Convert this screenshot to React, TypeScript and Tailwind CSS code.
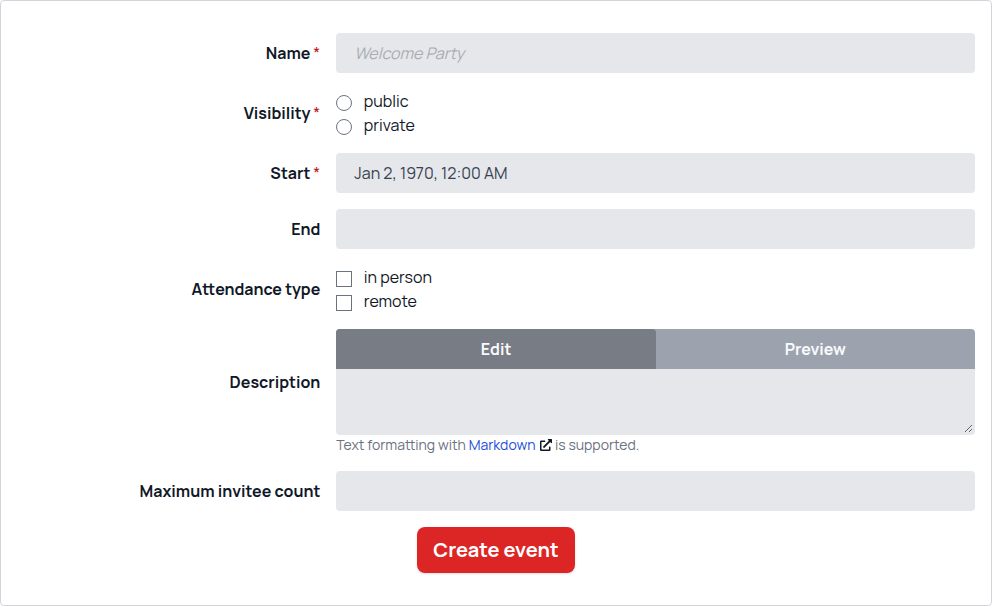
import type { ReactNode } from 'react';
import { FaExternalLinkAlt } from 'react-icons/fa';

function Row({ label, required, children }: { label: string; required?: boolean; children: ReactNode }) {
  return (
    <div className="flex items-center">
      <div className="w-1/3 pr-4 text-right font-bold text-[#111827]">
        {label}
        {required && <span className="ml-[3px] font-normal text-[#b91c1c]">*</span>}
      </div>
      <div className="w-2/3">{children}</div>
    </div>
  );
}

const field =
  'block h-10 w-full rounded bg-[#e5e7eb] px-[18px] text-base text-[#374151] outline-none placeholder:italic placeholder:text-[#a9adb6]';

function Choice({ type, name, children }: { type: 'radio' | 'checkbox'; name: string; children: ReactNode }) {
  return (
    <label className="flex h-6 items-center text-[#111827]">
      <input
        type={type}
        name={name}
        className={
          'relative top-0.5 mr-[11.5px] size-4 shrink-0 appearance-none border border-[#6b7280] bg-white ' +
          (type === 'radio' ? 'rounded-full' : '')
        }
      />
      {children}
    </label>
  );
}

export default function App() {
  return (
    <div className="h-[606px] w-[992px] rounded border border-[#d1d5db] bg-white px-4 py-8 font-['Manrope','Inter',sans-serif] text-base">
      <form className="flex flex-col gap-4">
        <Row label="Name" required>
          <input className={field} placeholder="Welcome Party" />
        </Row>
        <Row label="Visibility" required>
          <Choice type="radio" name="visibility">public</Choice>
          <Choice type="radio" name="visibility">private</Choice>
        </Row>
        <Row label="Start" required>
          <input className={field} defaultValue="Jan 2, 1970, 12:00 AM" />
        </Row>
        <Row label="End">
          <input className={field} />
        </Row>
        <Row label="Attendance type">
          <Choice type="checkbox" name="in-person">in person</Choice>
          <Choice type="checkbox" name="remote">remote</Choice>
        </Row>
        <div>
          <Row label="Description">
            <div className="flex h-10 rounded-t bg-[#9ca3af] font-bold text-[#f9fafb]">
              <button type="button" className="w-1/2 rounded-t bg-[#787c84]">Edit</button>
              <button type="button" className="w-1/2">Preview</button>
            </div>
            <textarea className="block h-[66px] w-full resize-y rounded-b border-2 border-[#e5e7eb] bg-[#e5e7eb] outline-none" />
          </Row>
          <div className="ml-[33.3333%] flex h-5 items-center text-sm whitespace-pre text-[#6b7280]">
            <span>Text formatting with </span>
            <a className="text-[#1d4ed8]">Markdown</a>
            <FaExternalLinkAlt className="mr-[3px] ml-[4.5px] size-3 text-[#111827]" />
            <span>is supported.</span>
          </div>
        </div>
        <Row label="Maximum invitee count">
          <input className={field} />
        </Row>
        <button type="button" className="h-[46px] w-[158px] self-center rounded-lg bg-[#dc2626] text-xl font-bold text-white shadow">
          Create event
        </button>
      </form>
    </div>
  );
}
